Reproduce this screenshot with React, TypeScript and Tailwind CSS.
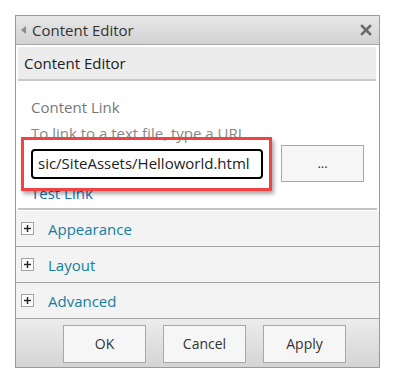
import React from "react";

function PlusBox() {
  return (
    <div className="w-[13px] h-[13px] border border-[#a3a3a3] bg-[#fafafa] flex items-center justify-center shrink-0">
      <svg width="9" height="9" viewBox="0 0 9 9">
        <rect x="1" y="3.8" width="7" height="1.4" fill="#222" />
        <rect x="3.8" y="1" width="1.4" height="7" fill="#222" />
      </svg>
    </div>
  );
}

function Section({ label }: { label: string }) {
  return (
    <div className="h-[36px] bg-[#f3f3f3] border-b border-[#a3a3a3] flex items-center pl-[5px]">
      <PlusBox />
      <span className="ml-[14px] text-[15px] text-[#15809d] pt-[2px]">{label}</span>
    </div>
  );
}

function Btn({ label }: { label: string }) {
  return (
    <div className="w-[83px] h-[38px] border border-[#a8a8a8] bg-[#f6f6f6] flex items-center justify-center text-[14px] text-[#333]">
      {label}
    </div>
  );
}

export default function App() {
  return (
    <div
      className="w-[399px] h-[382px] bg-white pt-[15px] pl-[15px]"
      style={{ fontFamily: '"Open Sans", "Noto Sans", sans-serif' }}
    >
      <div className="w-[365px] h-[353px] border border-[#9a9a9a] flex flex-col relative">
        {/* header */}
        <div className="h-[29px] border-b border-[#a6a6a6] bg-gradient-to-b from-[#e8e8e8] to-[#d2d2d2] flex items-center pl-[5px] pr-[7px] shrink-0">
          <svg width="5" height="8" viewBox="0 0 5 8" className="shrink-0">
            <path d="M5 0 L0 4 L5 8 Z" fill="#8a8a8a" />
          </svg>
          <span className="ml-[6px] text-[15px] text-[#333] leading-none">Content Editor</span>
          <svg width="12" height="12" viewBox="0 0 12 12" className="ml-auto">
            <path d="M2 2 L10 10 M10 2 L2 10" stroke="#6a6a6a" strokeWidth="2.6" strokeLinecap="square" />
          </svg>
        </div>
        {/* subheader */}
        <div className="mt-[2px] ml-[2px] mr-[3px] h-[34px] bg-[#ececec] border-b-2 border-[#c8c8c8] flex items-center pl-[6px] shrink-0">
          <span className="text-[15px] text-[#222]">Content Editor</span>
        </div>
        {/* content */}
        <div className="ml-[2px] mr-[2px] pl-[13px] pt-[15px] h-[129px] border-b-2 border-[#c4c4c4] shrink-0 relative">
          <div className="text-[15px] text-[#777] leading-[22px]">Content Link</div>
          <div className="text-[15px] text-[#888] leading-[22px] mt-[4px]">To link to a text file, type a URL</div>
          <div className="flex items-center mt-[1px]">
            <div className="w-[232px] h-[30px] border-2 border-black rounded-[4px] bg-white flex items-center pl-[5px] text-[15px] text-[#222] overflow-hidden whitespace-nowrap">
              sic/SiteAssets/Helloworld.html
            </div>
            <div className="ml-[18px] w-[83px] h-[37px] border border-[#a8a8a8] bg-[#f6f6f6] flex items-center justify-center text-[13px] text-[#333]">
              ...
            </div>
          </div>
          <div className="text-[15px] text-[#1b6fb5] leading-[22px] mt-[0px]">Test Link</div>
          {/* red annotation box */}
          <div className="absolute left-[3px] top-[56px] w-[251px] h-[54px] border-[3px] border-[#ee4444] shadow-[2px_3px_4px_rgba(0,0,0,0.35)]" />
        </div>
        {/* sections */}
        <div className="mt-[1px] shrink-0">
          <Section label="Appearance" />
          <Section label="Layout" />
          <Section label="Advanced" />
        </div>
        {/* footer */}
        <div className="flex-1 bg-gradient-to-b from-[#ececec] to-[#d4d4d4] flex items-center pl-[47px] gap-[17px] pt-[1px]">
          <Btn label="OK" />
          <Btn label="Cancel" />
          <Btn label="Apply" />
        </div>
      </div>
    </div>
  );
}
